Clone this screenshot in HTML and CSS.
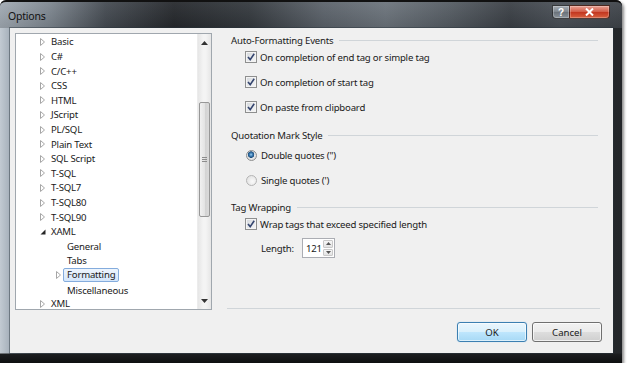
FILE: index.html
```html
<!DOCTYPE html>
<html lang="en">
<head>
  <meta charset="UTF-8">
  <title>Options</title>
  <link rel="stylesheet" href="styles.css">
</head>
<body>

<div class="window">
  <div class="titlebar">
    <span class="title">Options</span>
    <div class="caption">
      <span class="cap help">?</span>
      <span class="cap close">
        <svg width="9" height="8" viewBox="0 0 9 8"><path d="M1 0.5 L8 7.5 M8 0.5 L1 7.5" stroke="#fff" stroke-width="2"/></svg>
      </span>
    </div>
  </div>

  <div class="frame">
    <div class="client">
      <div class="main">

        <div class="tree">
          <ul class="tree-list">
            <li class="node"><span class="exp"><svg width="5" height="8" viewBox="0 0 5 8"><path d="M0.5 0.5 L4.5 4 L0.5 7.5 Z" fill="#fff" stroke="#a6a6a6"/></svg></span>Basic</li>
            <li class="node"><span class="exp"><svg width="5" height="8" viewBox="0 0 5 8"><path d="M0.5 0.5 L4.5 4 L0.5 7.5 Z" fill="#fff" stroke="#a6a6a6"/></svg></span>C#</li>
            <li class="node"><span class="exp"><svg width="5" height="8" viewBox="0 0 5 8"><path d="M0.5 0.5 L4.5 4 L0.5 7.5 Z" fill="#fff" stroke="#a6a6a6"/></svg></span>C/C++</li>
            <li class="node"><span class="exp"><svg width="5" height="8" viewBox="0 0 5 8"><path d="M0.5 0.5 L4.5 4 L0.5 7.5 Z" fill="#fff" stroke="#a6a6a6"/></svg></span>CSS</li>
            <li class="node"><span class="exp"><svg width="5" height="8" viewBox="0 0 5 8"><path d="M0.5 0.5 L4.5 4 L0.5 7.5 Z" fill="#fff" stroke="#a6a6a6"/></svg></span>HTML</li>
            <li class="node"><span class="exp"><svg width="5" height="8" viewBox="0 0 5 8"><path d="M0.5 0.5 L4.5 4 L0.5 7.5 Z" fill="#fff" stroke="#a6a6a6"/></svg></span>JScript</li>
            <li class="node"><span class="exp"><svg width="5" height="8" viewBox="0 0 5 8"><path d="M0.5 0.5 L4.5 4 L0.5 7.5 Z" fill="#fff" stroke="#a6a6a6"/></svg></span>PL/SQL</li>
            <li class="node"><span class="exp"><svg width="5" height="8" viewBox="0 0 5 8"><path d="M0.5 0.5 L4.5 4 L0.5 7.5 Z" fill="#fff" stroke="#a6a6a6"/></svg></span>Plain Text</li>
            <li class="node"><span class="exp"><svg width="5" height="8" viewBox="0 0 5 8"><path d="M0.5 0.5 L4.5 4 L0.5 7.5 Z" fill="#fff" stroke="#a6a6a6"/></svg></span>SQL Script</li>
            <li class="node"><span class="exp"><svg width="5" height="8" viewBox="0 0 5 8"><path d="M0.5 0.5 L4.5 4 L0.5 7.5 Z" fill="#fff" stroke="#a6a6a6"/></svg></span>T-SQL</li>
            <li class="node"><span class="exp"><svg width="5" height="8" viewBox="0 0 5 8"><path d="M0.5 0.5 L4.5 4 L0.5 7.5 Z" fill="#fff" stroke="#a6a6a6"/></svg></span>T-SQL7</li>
            <li class="node"><span class="exp"><svg width="5" height="8" viewBox="0 0 5 8"><path d="M0.5 0.5 L4.5 4 L0.5 7.5 Z" fill="#fff" stroke="#a6a6a6"/></svg></span>T-SQL80</li>
            <li class="node"><span class="exp"><svg width="5" height="8" viewBox="0 0 5 8"><path d="M0.5 0.5 L4.5 4 L0.5 7.5 Z" fill="#fff" stroke="#a6a6a6"/></svg></span>T-SQL90</li>
            <li class="node"><span class="exp"><svg width="6" height="6" viewBox="0 0 6 6"><path d="M5.5 0.5 L5.5 5.5 L0.5 5.5 Z" fill="#262626"/></svg></span>XAML</li>
            <li class="node child"><span class="exp"></span>General</li>
            <li class="node child"><span class="exp"></span>Tabs</li>
            <li class="node child"><span class="exp"><svg width="5" height="8" viewBox="0 0 5 8"><path d="M0.5 0.5 L4.5 4 L0.5 7.5 Z" fill="#fff" stroke="#a6a6a6"/></svg></span><span class="selected">Formatting</span></li>
            <li class="node child"><span class="exp"></span>Miscellaneous</li>
            <li class="node last"><span class="exp"><svg width="5" height="8" viewBox="0 0 5 8"><path d="M0.5 0.5 L4.5 4 L0.5 7.5 Z" fill="#fff" stroke="#a6a6a6"/></svg></span>XML</li>
          </ul>
          <div class="scrollbar">
            <div class="sb-btn"><svg width="7" height="4" viewBox="0 0 7 4"><path d="M0 4 L3.5 0 L7 4 Z" fill="#333"/></svg></div>
            <div class="sb-thumb"><span class="grip"></span></div>
            <div class="sb-btn bottom"><svg width="7" height="4" viewBox="0 0 7 4"><path d="M0 0 L3.5 4 L7 0 Z" fill="#333"/></svg></div>
          </div>
        </div>

        <div class="settings">
          <div class="group-head">Auto-Formatting Events</div>
          <div class="opt first"><span class="check"><svg width="10" height="10" viewBox="0 0 10 10"><path d="M2 5 L4.2 7.6 L8.2 1.8" fill="none" stroke="#34456f" stroke-width="1.6"/></svg></span>On completion of end tag or simple tag</div>
          <div class="opt"><span class="check"><svg width="10" height="10" viewBox="0 0 10 10"><path d="M2 5 L4.2 7.6 L8.2 1.8" fill="none" stroke="#34456f" stroke-width="1.6"/></svg></span>On completion of start tag</div>
          <div class="opt"><span class="check"><svg width="10" height="10" viewBox="0 0 10 10"><path d="M2 5 L4.2 7.6 L8.2 1.8" fill="none" stroke="#34456f" stroke-width="1.6"/></svg></span>On paste from clipboard</div>

          <div class="group-head">Quotation Mark Style</div>
          <div class="opt radio-row"><span class="radio on"></span>Double quotes (")</div>
          <div class="opt radio-row next"><span class="radio"></span>Single quotes (')</div>

          <div class="group-head">Tag Wrapping</div>
          <div class="opt first"><span class="check"><svg width="10" height="10" viewBox="0 0 10 10"><path d="M2 5 L4.2 7.6 L8.2 1.8" fill="none" stroke="#34456f" stroke-width="1.6"/></svg></span>Wrap tags that exceed specified length</div>
          <div class="length-row">
            <span class="length-label">Length:</span>
            <div class="spin">
              <span class="spin-value">121</span>
              <div class="spin-btns">
                <span class="spin-btn"><svg width="5" height="3" viewBox="0 0 5 3"><path d="M0 3 L2.5 0 L5 3 Z" fill="#555"/></svg></span>
                <span class="spin-btn"><svg width="5" height="3" viewBox="0 0 5 3"><path d="M0 0 L2.5 3 L5 0 Z" fill="#555"/></svg></span>
              </div>
            </div>
          </div>

          <div class="separator"></div>
        </div>
      </div>

      <div class="buttons">
        <button class="btn default" type="button">OK</button>
        <button class="btn" type="button">Cancel</button>
      </div>
    </div>
  </div>
</div>

</body>
</html>
```

FILE: styles.css
```css
* {
  box-sizing: border-box;
}

body {
  margin: 0;
  background: #fff;
  font-family: "Noto Sans", "Open Sans", sans-serif;
  font-size: 9.6px;
  letter-spacing: -0.2px;
  color: #1a1a1a;
}

.window {
  width: 622px;
  height: 363px;
  display: flex;
  flex-direction: column;
  border-radius: 6px 6px 0 0;
  background:
    linear-gradient(0deg, #0e0f10 0, #1c1e20 9px, transparent 10px),
    linear-gradient(90deg, #c2cad2 0, #a8b2bc 9px, #5b636b 40px, #3a3f45 50%, #2c3034 80%, #24272a 100%);
  box-shadow: 2px 2px 3px rgba(0, 0, 0, 0.45);
}

.titlebar {
  height: 28px;
  display: flex;
  align-items: flex-start;
  border-radius: 6px 6px 0 0;
  border-top: 2px solid #111;
  background:
    linear-gradient(180deg, rgba(255, 255, 255, 0.06), rgba(0, 0, 0, 0.1)),
    linear-gradient(90deg, #a2abb4 0%, #7e8790 8%, #454b52 17%, #26292d 28%, #34393e 40%, #5c636b 52%, #6c747c 62%, #565d64 72%, #3b4046 82%, #4a5057 90%, #3f444a 100%);
}

.title {
  margin: 7px 0 0 8px;
  line-height: 14px;
  font-size: 10.5px;
  color: #111;
}

.caption {
  display: flex;
  margin: 3px 12px 0 auto;
}

.cap {
  height: 14px;
  display: flex;
  align-items: center;
  justify-content: center;
  border: 1px solid rgba(20, 20, 20, 0.7);
  box-shadow: inset 0 0 0 1px rgba(255, 255, 255, 0.25);
}

.help {
  width: 17px;
  border-right: none;
  border-radius: 0 0 0 4px;
  background: linear-gradient(180deg, #a6adb4, #7d858d 50%, #6a727a 51%, #8a9299);
  color: #fff;
  font-family: "Liberation Sans", sans-serif;
  font-weight: bold;
  font-size: 10px;
  letter-spacing: 0;
}

.close {
  width: 41px;
  border-radius: 0 0 4px 0;
  background: linear-gradient(180deg, #e9a193, #d25a45 50%, #c2351f 51%, #d8613f);
}

.frame {
  flex: 1;
  padding: 0 9px 10px 10px;
  display: flex;
}

.client {
  flex: 1;
  background: #f0f0f0;
  padding: 5px 0 0 5px;
  box-shadow: 0 0 0 1px rgba(40, 50, 60, 0.45);
}

.main {
  height: 277px;
  display: flex;
}

/* tree */

.tree {
  width: 197px;
  display: flex;
  background: #fff;
  border: 1px solid #a0a7ae;
}

.tree-list {
  flex: 1;
  list-style: none;
  margin: 0;
  padding: 0.7px 0 0;
  overflow: hidden;
}

.node {
  height: 14.6px;
  display: flex;
  align-items: center;
  padding-left: 24px;
  white-space: nowrap;
}

.node.child {
  padding-left: 40px;
}

.node.last {
  height: 13px;
  align-items: flex-start;
}

.exp {
  width: 11px;
  height: 14px;
  display: flex;
  align-items: center;
  flex-shrink: 0;
}

.selected {
  margin-left: -4px;
  padding: 0 3px;
  line-height: 12px;
  border: 1px solid #84acdd;
  border-radius: 2px;
  background: linear-gradient(180deg, #eef5fd, #d4e6fb);
}

.scrollbar {
  width: 14px;
  display: flex;
  flex-direction: column;
  background: linear-gradient(90deg, #e6e6e6, #f4f4f4 40%, #f4f4f4 60%, #e6e6e6);
  border-left: 1px solid #ececec;
}

.sb-btn {
  height: 17px;
  display: flex;
  align-items: center;
  justify-content: center;
}

.sb-btn.bottom {
  margin-top: auto;
}

.sb-thumb {
  height: 115px;
  margin: 51px 1px 0;
  display: flex;
  align-items: center;
  justify-content: center;
  border: 1px solid #979797;
  border-radius: 2px;
  background: linear-gradient(90deg, #f1f1f1, #e4e4e4 50%, #d2d2d2 51%, #dadada);
}

.grip {
  width: 5px;
  height: 5px;
  background: repeating-linear-gradient(180deg, #8c8c8c 0 1px, transparent 1px 2px);
}

/* settings */

.settings {
  width: 374px;
  margin-left: 14px;
  display: flex;
  flex-direction: column;
}

.group-head {
  height: 14px;
  display: flex;
  align-items: center;
  padding: 0 2px 0 5px;
  white-space: nowrap;
}

.group-head::after {
  content: "";
  flex: 1;
  height: 1px;
  margin-left: 6px;
  background: #d0d5d9;
}

.opt {
  height: 14px;
  display: flex;
  align-items: center;
  padding-left: 19px;
  margin-top: 11px;
}

.opt.first {
  margin-top: 3px;
}

.opt.first + .opt {
  margin-top: 11px;
}

.group-head + .opt.first {
  margin-top: 3px;
}

.opt + .group-head {
  margin-top: 14px;
}

.radio-row.next + .group-head {
  margin-top: 13px;
}

.group-head + .radio-row {
  margin-top: 6px;
}

.check {
  width: 12px;
  height: 12px;
  margin-right: 3px;
  display: flex;
  align-items: center;
  justify-content: center;
  border: 1px solid #8e8f8f;
  background: linear-gradient(135deg, #d3d7dc, #f7f7f7);
  box-shadow: inset 0 0 0 1px #f4f4f4;
}

.radio {
  width: 11px;
  height: 11px;
  margin: 0 4px 0 1px;
  border-radius: 50%;
  border: 1px solid #b4b4b4;
  background: radial-gradient(circle at 60% 60%, #fafafa, #dcdcdc);
}

.radio.on {
  border-color: #8e8f8f;
  background:
    radial-gradient(circle at 45% 40%, #9fd1f3 0, #3f7fb5 1.5px, #1e4f7e 3px, transparent 3.5px),
    radial-gradient(circle, #f4f4f4, #d4d6d8);
}

.length-row {
  height: 20px;
  display: flex;
  align-items: center;
  margin-top: 7px;
  padding-left: 35px;
}

.length-label {
  width: 41px;
}

.spin {
  height: 20px;
  width: 33px;
  display: flex;
  border: 1px solid #abadb3;
  background: #fff;
}

.spin-value {
  width: 19px;
  padding-left: 3px;
  display: flex;
  align-items: center;
}

.spin-btns {
  flex: 1;
  display: flex;
  flex-direction: column;
  padding: 1px;
  gap: 1px;
}

.spin-btn {
  flex: 1;
  display: flex;
  align-items: center;
  justify-content: center;
  border: 1px solid #c9c9c9;
  border-radius: 1px;
  background: linear-gradient(180deg, #f7f7f7, #e3e3e3);
}

.separator {
  margin: auto 0 1px 1px;
  height: 1px;
  background: #d0d5d9;
}

/* buttons */

.buttons {
  display: flex;
  justify-content: flex-end;
  gap: 5px;
  margin-top: 12px;
  padding-right: 11px;
}

.btn {
  width: 70px;
  height: 20px;
  padding: 0;
  font: inherit;
  color: #1a1a1a;
  border: 1px solid #707070;
  border-radius: 3px;
  background: linear-gradient(180deg, #f2f2f2, #ebebeb 50%, #dddddd 51%, #cfcfcf);
  box-shadow: inset 0 0 0 1px rgba(255, 255, 255, 0.7);
}

.btn.default {
  border-color: #3c7fb1;
  background: linear-gradient(180deg, #eaf6fd, #d9f0fc 50%, #bee6fd 51%, #a7d9f5);
  box-shadow: inset 0 0 0 1px rgba(255, 255, 255, 0.6), 0 0 1px #8cc6ef;
}
```
